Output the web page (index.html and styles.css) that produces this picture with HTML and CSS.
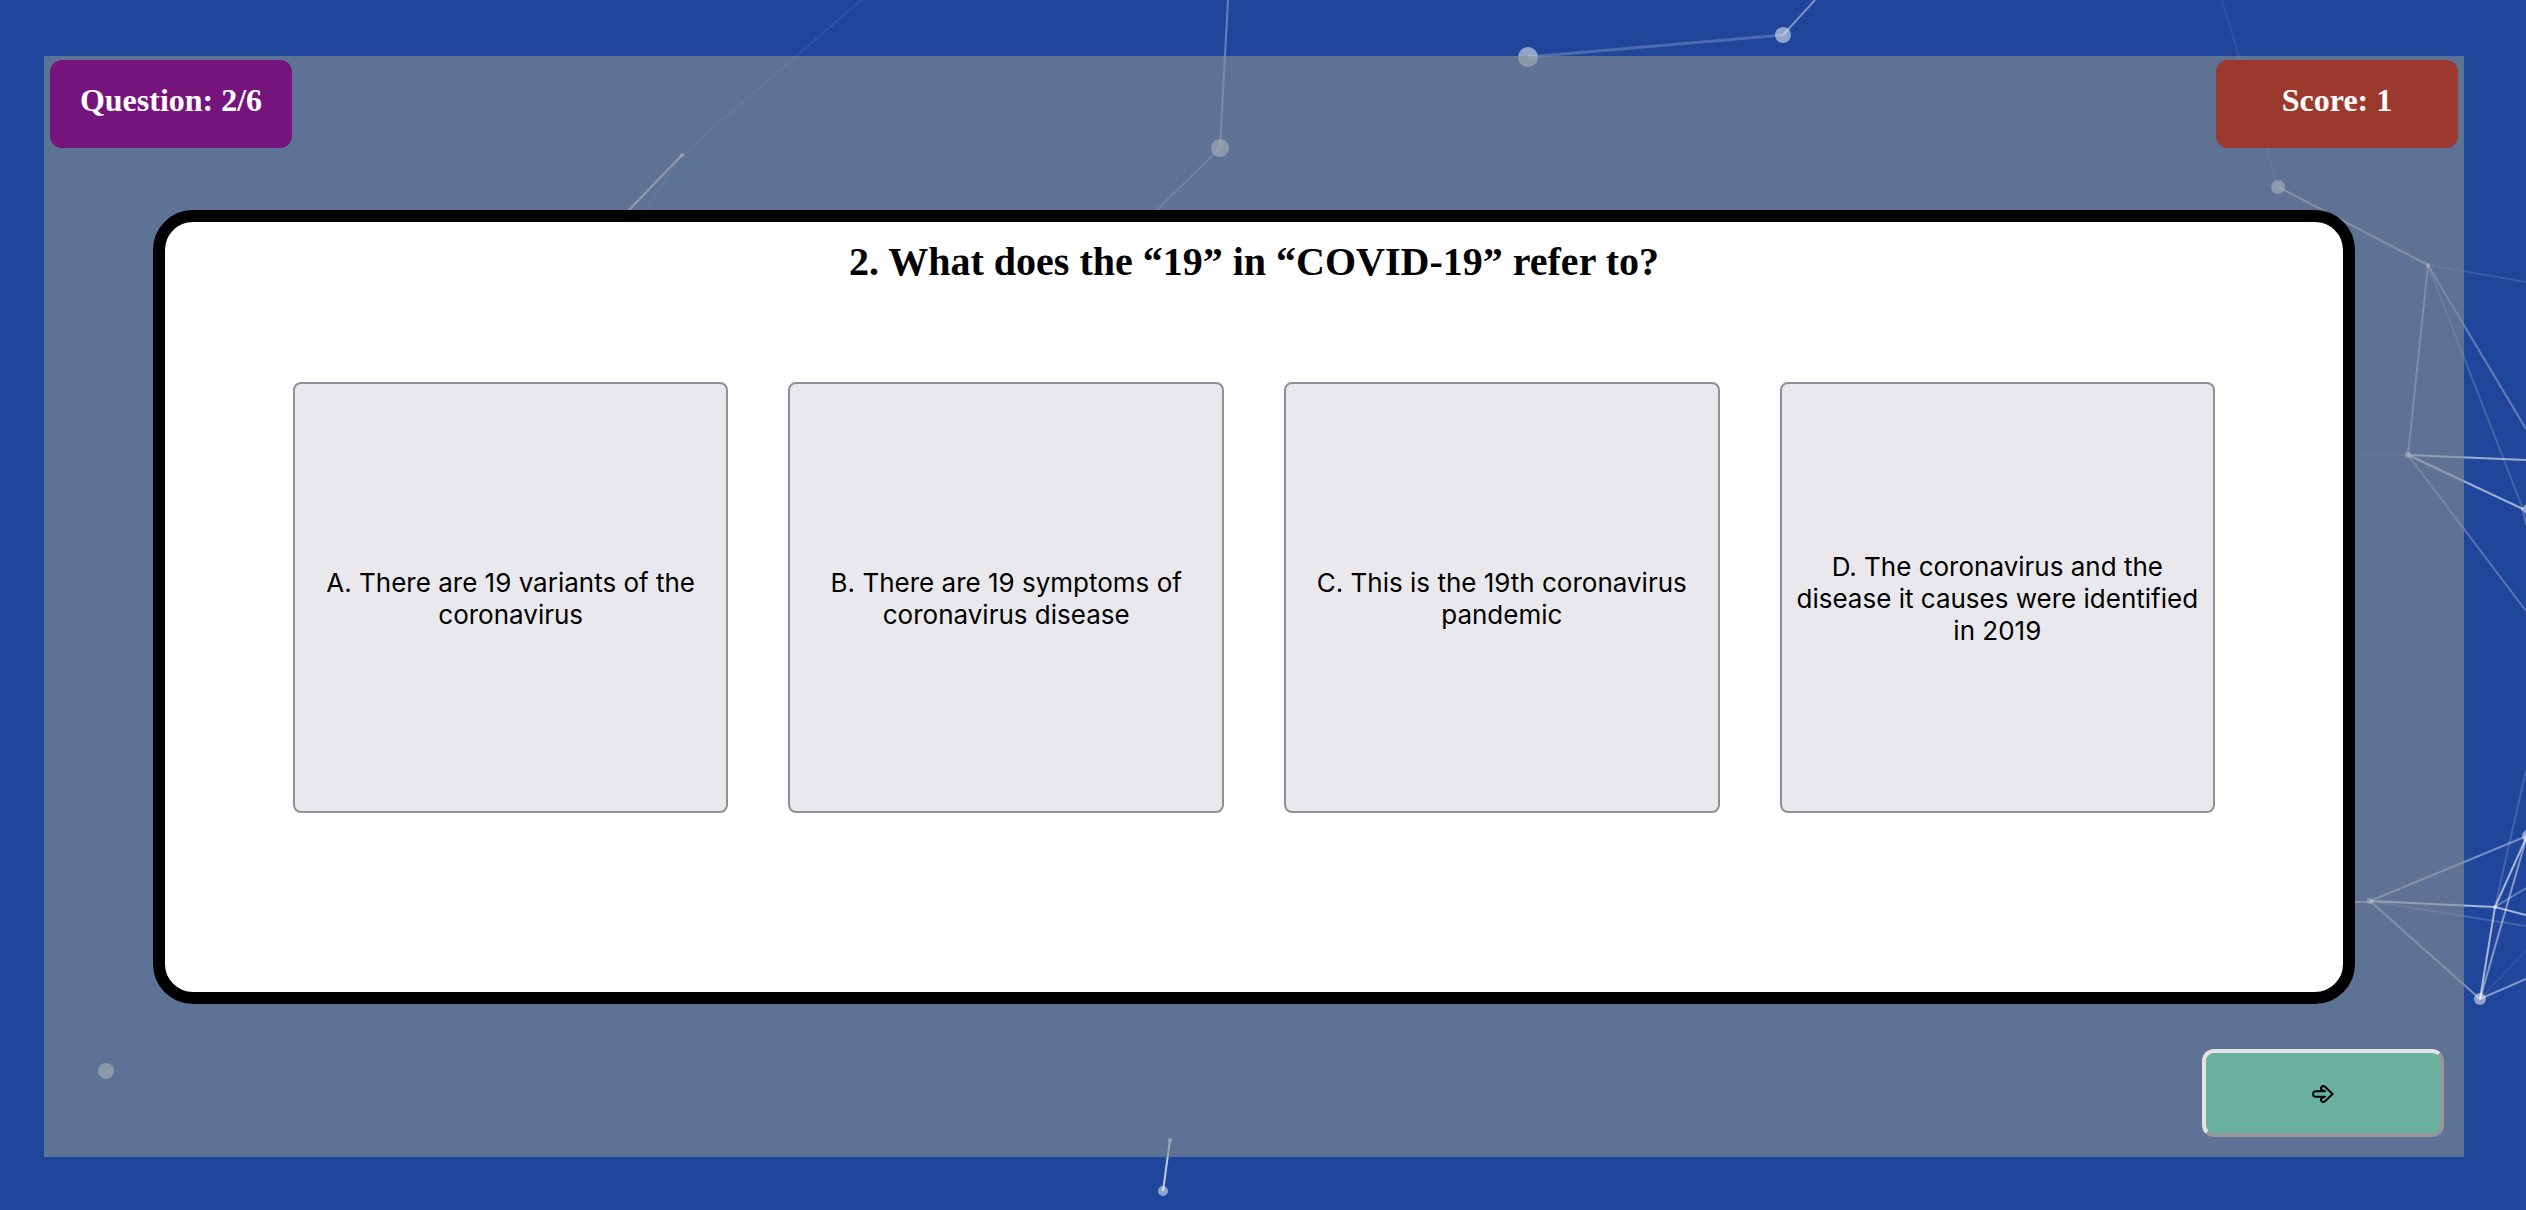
FILE: index.html
```html
<!DOCTYPE html>
<html lang="en">
<head>
  <meta charset="utf-8">
  <meta name="viewport" content="width=device-width, initial-scale=1">
  <title>COVID-19 Quiz</title>
  <link rel="stylesheet" href="styles.css">
</head>
<body class="page">
  <svg class="particles" viewBox="0 0 2526 1210" preserveAspectRatio="xMidYMid slice" aria-hidden="true">
    <g stroke="#fff" stroke-width="2" fill="none">
      <path opacity=".07" d="M682 155 861 0M682 155 645 210M2278 187 2222 0M2480 999 2526 950"/>
      <path opacity=".12" d="M2428 265 2526 282"/>
      <path opacity=".05" d="M2408 455H2355"/>
      <path opacity=".55" d="M682 155 629 210"/>
      <path opacity=".32" d="M1228 0 1220 148"/>
      <path opacity=".22" d="M1220 148 1157 210"/>
      <path opacity=".2" stroke-width="3" d="M1528 57 1783 35"/>
      <path opacity=".4" d="M1783 35 1815 0"/>
      <path opacity=".4" d="M2278 187 2428 265"/>
      <path opacity=".35" d="M2428 265 2408 455"/>
      <path opacity=".3" d="M2428 265 2526 429"/>
      <path opacity=".16" d="M2428 265 2523 509M2370 901 2526 926M2495 907 2526 770"/>
      <path opacity=".25" d="M2408 455 2526 611M2523 509 2526 525"/>
      <path opacity=".55" d="M2408 455 2526 460M2408 455 2523 509"/>
      <path opacity=".4" d="M2370 901 2527 836M2370 901 2480 999M2355 902H2370"/>
      <path opacity=".6" d="M2370 901 2495 907 2526 915M2495 907 2527 836M2495 907 2480 999"/>
      <path opacity=".45" d="M2527 836 2480 999 2526 979"/>
      <path opacity=".3" d="M2495 907 2526 888"/>
    </g>
    <g fill="#fff" opacity=".5">
      <circle cx="682" cy="155" r="2"/>
      <circle cx="1220" cy="148" r="9"/>
      <circle cx="1528" cy="57" r="10"/>
      <circle cx="1783" cy="35" r="8"/>
      <circle cx="2278" cy="187" r="7"/>
      <circle cx="2428" cy="265" r="2"/>
      <circle cx="2408" cy="455" r="3"/>
      <circle cx="2370" cy="901" r="3"/>
      <circle cx="2495" cy="907" r="2"/>
      <circle cx="2480" cy="999" r="6"/>
      <circle cx="2528" cy="836" r="6"/>
      <circle cx="2523" cy="509" r="2"/>
      <circle cx="2528" cy="509" r="5"/>
      <circle cx="106" cy="1071" r="8"/>
      <circle cx="1163" cy="1191" r="5"/>
      <circle cx="1170" cy="1140" r="2"/>
    </g>
    <path d="M1163 1191 1170 1140" stroke="#fff" stroke-width="2" opacity=".7"/>
  </svg>

  <main class="quiz">
    <header class="status">
      <p class="badge badge-question">Question: 2/6</p>
      <p class="badge badge-score">Score: 1</p>
    </header>

    <section class="card" aria-labelledby="question">
      <h1 class="question" id="question">2. What does the “19” in “COVID-19” refer to?</h1>
      <div class="answers">
        <button class="answer" type="button">A. There are 19 variants of the coronavirus</button>
        <button class="answer" type="button">B. There are 19 symptoms of coronavirus disease</button>
        <button class="answer" type="button">C. This is the 19th coronavirus pandemic</button>
        <button class="answer" type="button">D. The coronavirus and the disease it causes were identified in 2019</button>
      </div>
    </section>

    <footer class="controls">
      <button class="next" type="button" aria-label="Next question">
        <svg class="next-icon" viewBox="0 0 22 18" aria-hidden="true">
          <path d="M3.500 6.300H13L9.500 4.600C8 2.500 10.500 0 12.800 1.600L20.600 9 12.800 16.400C10.500 18 8 15.500 9.500 13.400L13 11.700H3.500C.2 11.700.2 6.300 3.500 6.300Z" fill="none" stroke="#000" stroke-width="2" stroke-linejoin="round"/>
        </svg>
      </button>
    </footer>
  </main>
</body>
</html>
```
FILE: styles.css
```css
* {
  box-sizing: border-box;
}

.page {
  display: flex;
  min-height: 100vh;
  margin: 0;
  padding: 56px 62px 53px 44px;
  background: #20469b;
  font-family: "Liberation Serif", "Times New Roman", serif;
}

.particles {
  position: absolute;
  inset: 0;
  width: 100%;
  height: 100%;
}

.quiz {
  position: relative;
  flex: 1;
  display: flex;
  flex-direction: column;
  background: rgba(138, 147, 147, 0.59);
}

.status {
  display: flex;
  justify-content: space-between;
  padding: 4px 6px 0;
}

.badge {
  width: 242px;
  height: 88px;
  margin: 0;
  padding-top: 20px;
  border-radius: 12px;
  color: #fff;
  font-size: 32px;
  font-weight: bold;
  line-height: 40px;
  text-align: center;
}

.badge-question {
  background: #75147c;
}

.badge-score {
  background: #9b392e;
}

.card {
  flex: 1;
  width: 91%;
  margin: 62px auto 45px;
  padding: 18px 128px;
  border: 12px solid #000;
  border-radius: 40px;
  background: #fff;
}

.question {
  margin: 0 0 98px;
  font-size: 40px;
  line-height: 44px;
  text-align: center;
}

.answers {
  display: grid;
  grid-template-columns: repeat(4, 1fr);
  gap: 60px;
}

.answer {
  min-height: 431px;
  padding: 4px 12px 2px;
  border: 2px solid #8f8f9d;
  border-radius: 8px;
  background: #e9e9ed;
  color: #000;
  font-family: Inter, sans-serif;
  font-size: 26px;
  line-height: 32px;
  text-align: center;
}

.controls {
  display: flex;
  justify-content: flex-end;
  padding: 0 20px 20px;
}

.next {
  display: flex;
  align-items: center;
  justify-content: center;
  width: 242px;
  height: 88px;
  padding: 2px 6px 0;
  border: 4px solid;
  border-color: #e3e3e3 #979797 #979797 #e3e3e3;
  border-radius: 12px;
  background: #68b19f;
}

.next-icon {
  width: 22px;
  height: 18px;
}
```
